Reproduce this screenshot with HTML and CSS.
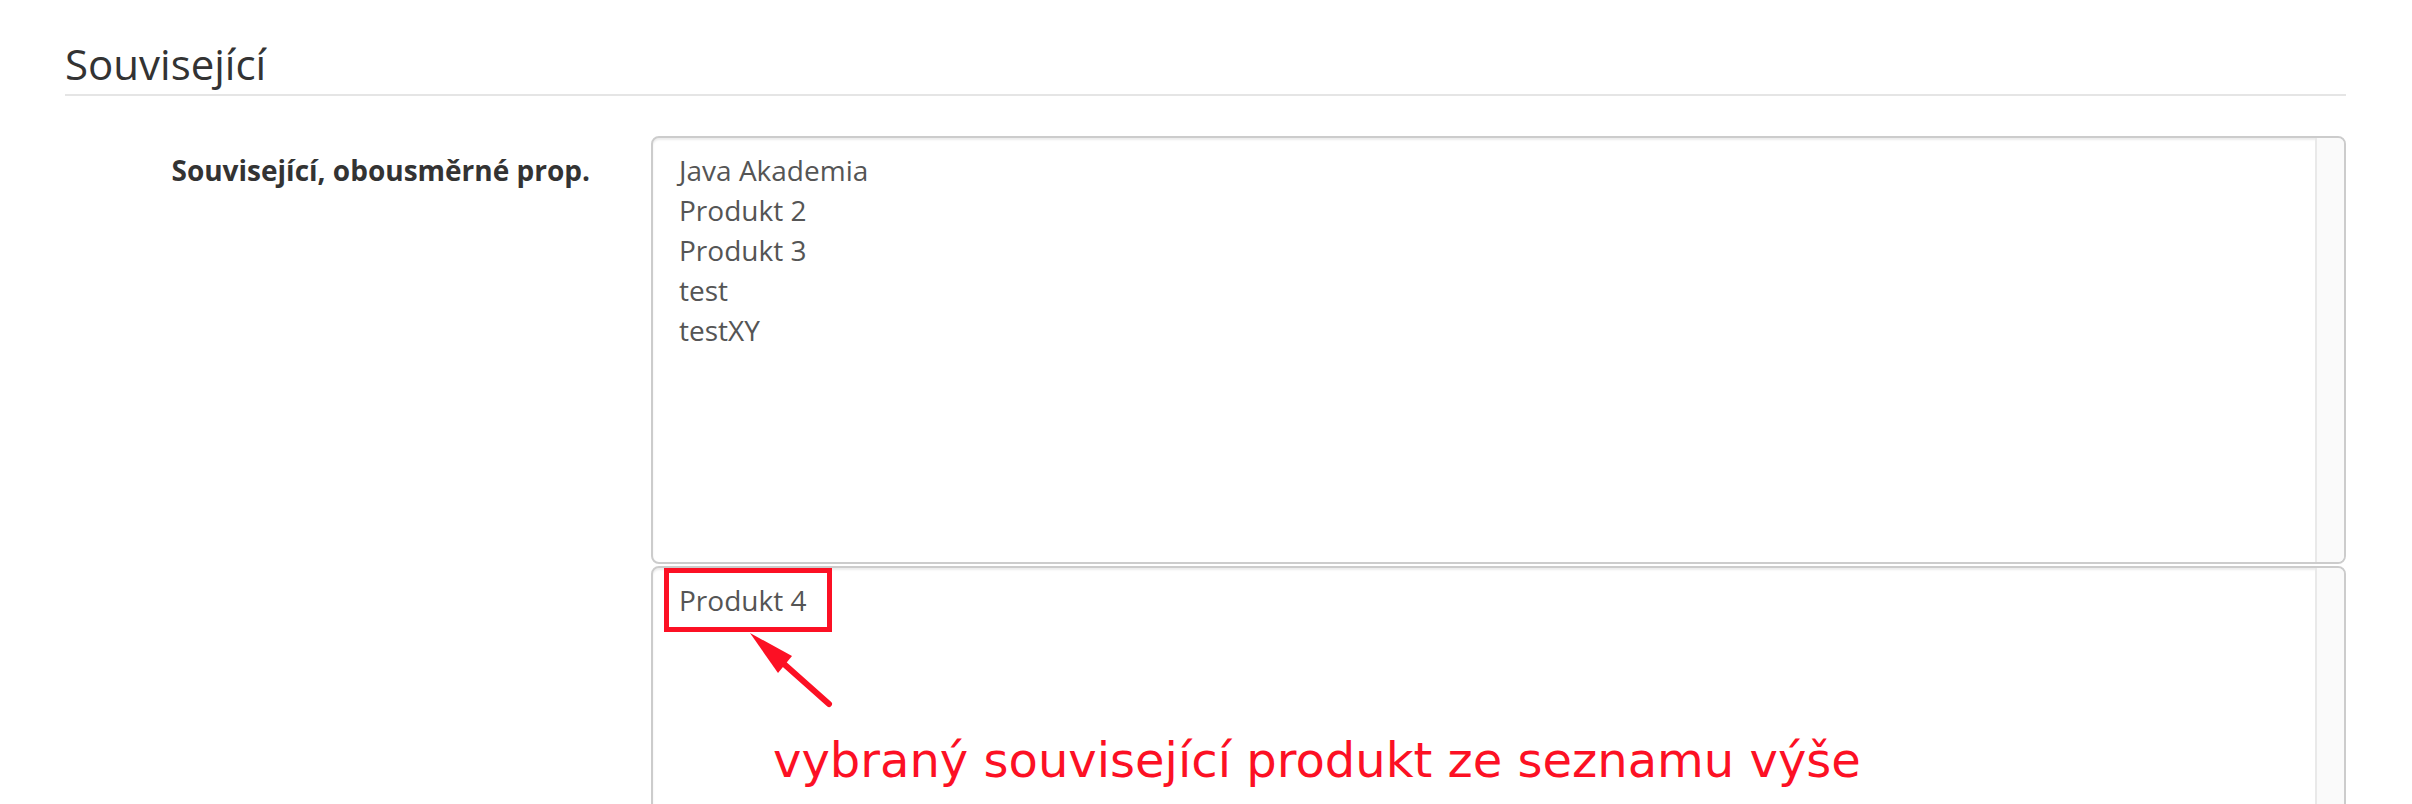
FILE: index.html
```html
<!DOCTYPE html>
<html lang="cs">
<head>
<meta charset="utf-8">
<title>Související</title>
<link rel="stylesheet" href="styles.css">
</head>
<body>
<div class="page">
  <fieldset class="section">
    <legend class="section-title">Související</legend>
    <div class="form-row">
      <label class="form-label">Související, obousměrné prop.</label>
      <div class="form-field">
        <div class="listbox listbox-top">
          <ul class="listbox-items">
            <li>Java Akademia</li>
            <li>Produkt 2</li>
            <li>Produkt 3</li>
            <li>test</li>
            <li>testXY</li>
          </ul>
          <div class="listbox-track"></div>
        </div>
        <div class="listbox listbox-bottom">
          <ul class="listbox-items">
            <li>Produkt 4</li>
          </ul>
          <div class="listbox-track"></div>
          <div class="mark-box"></div>
          <svg class="mark-arrow" width="100" height="90" viewBox="0 0 100 90" aria-hidden="true">
            <line x1="44" y1="39" x2="89" y2="79" stroke="#fc1024" stroke-width="6" stroke-linecap="round"/>
            <polygon points="10,8 52,31 38,48" fill="#fc1024"/>
          </svg>
          <div class="mark-note">vybraný související produkt ze seznamu výše</div>
        </div>
      </div>
    </div>
  </fieldset>
</div>
</body>
</html>
```

FILE: styles.css
```css
html, body {
  margin: 0;
  padding: 0;
  background: #ffffff;
}

body {
  font-family: "Open Sans", "Liberation Sans", sans-serif;
  color: #333333;
  overflow: hidden;
}

.page {
  padding: 34px 66px 0 65px;
}

.section {
  margin: 0;
  padding: 0;
  border: 0;
  min-width: 0;
}

.section-title {
  display: block;
  width: 100%;
  box-sizing: border-box;
  margin: 0 0 40px;
  padding: 0;
  font-size: 42px;
  line-height: 60px;
  font-weight: 400;
  color: #333333;
  border-bottom: 2px solid #e5e5e5;
}

.form-row {
  display: grid;
  grid-template-columns: 525px 1fr;
  column-gap: 61px;
  align-items: start;
}

.form-label {
  display: block;
  padding-top: 14px;
  text-align: right;
  font-size: 28px;
  line-height: 40px;
  font-weight: 700;
  color: #333333;
}

.form-field {
  display: flex;
  flex-direction: column;
  gap: 2px;
}

.listbox {
  position: relative;
  display: flex;
  border: 2px solid #cccccc;
  border-radius: 8px;
  box-shadow: inset 0 2px 2px rgba(0, 0, 0, 0.075);
  background: #ffffff;
  box-sizing: border-box;
}

.listbox-top {
  height: 428px;
}

.listbox-bottom {
  height: 400px;
}

.listbox-items {
  flex: 1;
  list-style: none;
  margin: 0;
  padding: 12px 26px;
  font-size: 28px;
  line-height: 40px;
  color: #555555;
}

.listbox-track {
  width: 27px;
  background: #fafafa;
  border-left: 2px solid #e9e9e9;
  border-radius: 0 6px 6px 0;
}

.mark-box {
  position: absolute;
  left: 11px;
  top: 0px;
  width: 168px;
  height: 64px;
  box-sizing: border-box;
  border: 5px solid #fc1024;
}

.mark-arrow {
  position: absolute;
  left: 87px;
  top: 57px;
}

.mark-note {
  position: absolute;
  left: 120px;
  top: 168px;
  font-family: "DejaVu Sans", Verdana, sans-serif;
  font-size: 48px;
  line-height: 48px;
  color: #fc1024;
  white-space: nowrap;
}
```
